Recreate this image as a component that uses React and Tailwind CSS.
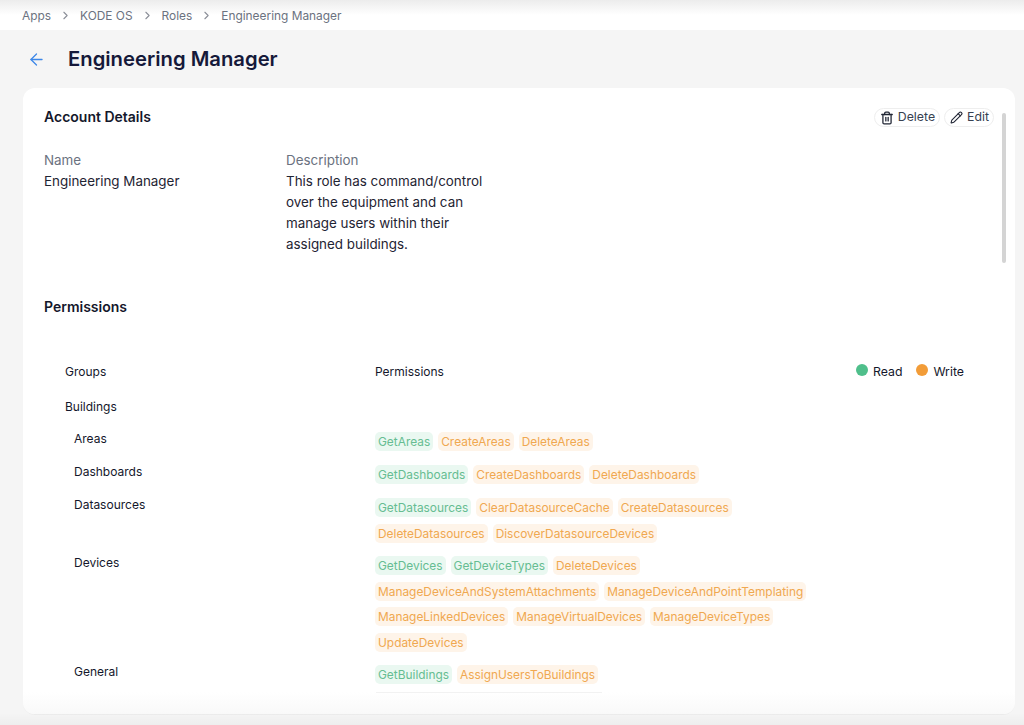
import { ArrowLeft, ChevronRight, Trash2, Pencil } from 'lucide-react';

const crumbs = ['Apps', 'KODE OS', 'Roles', 'Engineering Manager'];

const groups = [
    { name: 'Areas', read: ['GetAreas'], write: ['CreateAreas', 'DeleteAreas'], h: 'h-[33px]' },
    { name: 'Dashboards', read: ['GetDashboards'], write: ['CreateDashboards', 'DeleteDashboards'], h: 'h-[33px]' },
    { name: 'Datasources', read: ['GetDatasources'], write: ['ClearDatasourceCache', 'CreateDatasources', 'DeleteDatasources', 'DiscoverDatasourceDevices'], h: 'h-[58px]' },
    { name: 'Devices', read: ['GetDevices', 'GetDeviceTypes'], write: ['DeleteDevices', 'ManageDeviceAndSystemAttachments', 'ManageDeviceAndPointTemplating', 'ManageLinkedDevices', 'ManageVirtualDevices', 'ManageDeviceTypes', 'UpdateDevices'], h: 'h-[109px]' },
    { name: 'General', read: ['GetBuildings'], write: ['AssignUsersToBuildings'], h: 'h-[27px]' },
];

function Tag({ label, write }) {
    return (
        <span className={`h-[19px] px-[3px] rounded-[5px] text-[11.9px] leading-[19px] whitespace-nowrap ${write ? 'bg-[#fef4e9] text-[#f0a850]' : 'bg-[#eaf8f1] text-[#66bd92]'}`}>
            {label}
        </span>
    );
}

export default function App() {
    return (
        <div className="relative h-[725px] overflow-hidden bg-[#f5f5f5] font-['Inter',sans-serif] text-[#14172b]">
            {/* Breadcrumb */}
            <div className="h-[30px] pt-[2px] bg-gradient-to-b from-[#ececec] via-white to-white flex items-center gap-[8px] pl-[22px] text-[11.9px] text-[#6b7280]">
                {crumbs.map((c, i) => (
                    <div key={c} className="flex items-center gap-[8px]">
                        {i > 0 && <ChevronRight size={13} className="text-[#8b8f98]" />}
                        <span>{c}</span>
                    </div>
                ))}
            </div>

            {/* Title */}
            <div className="h-[58px] pt-[1px] flex items-center pl-[27px]">
                <ArrowLeft size={19} strokeWidth={1.6} className="text-[#3d87e8]" />
                <h1 className="ml-[22px] text-[20.25px] font-semibold text-[#15193a]">Engineering Manager</h1>
            </div>

            {/* Card */}
            <div className="relative mx-[23px] w-[992px] h-[627px] bg-white rounded-[12px] overflow-hidden border-b border-[#ececec]">
                <div className="absolute right-[9px] top-[25px] w-[4px] h-[150px] bg-[#d4d4d4] rounded-full"></div>
                <div className="absolute right-[21px] top-[20px] flex gap-[4px] text-[12.3px] text-[#374151]">
                    <button className="h-[19px] pl-[5px] pr-[4px] flex items-center gap-[4px] border border-[#eeeeee] rounded-full">
                        <Trash2 size={14} strokeWidth={2.2} className="text-[#1f2433]" />
                        Delete
                    </button>
                    <button className="h-[19px] pl-[5px] pr-[4px] flex items-center gap-[4px] border border-[#eeeeee] rounded-full">
                        <Pencil size={13} strokeWidth={2} className="text-[#1f2433]" />
                        Edit
                    </button>
                </div>

                <div className="pt-[20px] pl-[21px]">
                    <h2 className="text-[14px] leading-[18px] font-semibold">Account Details</h2>

                    <div className="mt-[23.5px] flex text-[13.4px] leading-[21px]">
                        <div className="w-[242px]">
                            <div className="text-[#6b7280]">Name</div>
                            <div className="text-[#1f2433]">Engineering Manager</div>
                        </div>
                        <div className="w-[215px]">
                            <div className="text-[#6b7280]">Description</div>
                            <div className="text-[#1f2433]">This role has command/control over the equipment and can manage users within their assigned buildings.</div>
                        </div>
                    </div>

                    <h2 className="mt-[43.5px] text-[14px] leading-[18px] font-semibold">Permissions</h2>

                    {/* Permissions table */}
                    <div className="mt-[46px] pl-[21px] pr-[51px] text-[12px]">
                        <div className="flex items-center h-[20px]">
                            <div className="w-[310px]">Groups</div>
                            <div>Permissions</div>
                            <div className="ml-auto flex items-center gap-[14px] text-[12.3px]">
                                <div className="flex items-center gap-[5px]">
                                    <span className="w-[12px] h-[12px] rounded-full bg-[#4fbf8b] -mt-[4px]"></span>
                                    Read
                                </div>
                                <div className="flex items-center gap-[5px]">
                                    <span className="w-[12px] h-[12px] rounded-full bg-[#f29c38] -mt-[4px]"></span>
                                    Write
                                </div>
                            </div>
                        </div>
                        <div className="mt-[14.5px] leading-[20px]">Buildings</div>
                        <div className="mt-[15.5px]">
                            {groups.map((g) => (
                                <div key={g.name} className={`flex ${g.h}`}>
                                    <div className="w-[310px] pl-[9px] leading-[16px] -mt-[1px]">{g.name}</div>
                                    <div className="w-[440px] flex flex-wrap content-start gap-x-[5px] gap-y-[6.7px]">
                                        {g.read.map((p) => <Tag key={p} label={p} />)}
                                        {g.write.map((p) => <Tag key={p} label={p} write />)}
                                    </div>
                                </div>
                            ))}
                        </div>
                        <div className="w-[226px] ml-[311px] border-t border-[#f2f2f2]"></div>
                    </div>
                </div>

                <div className="absolute left-0 right-0 bottom-0 h-[22px] bg-gradient-to-b from-white/0 to-[#f9f9f9]"></div>
            </div>

            {/* soft shade along the window bottom */}
            <div className="absolute left-0 right-0 bottom-0 h-[12px] bg-gradient-to-b from-black/0 to-black/[0.03]"></div>
        </div>
    );
}
